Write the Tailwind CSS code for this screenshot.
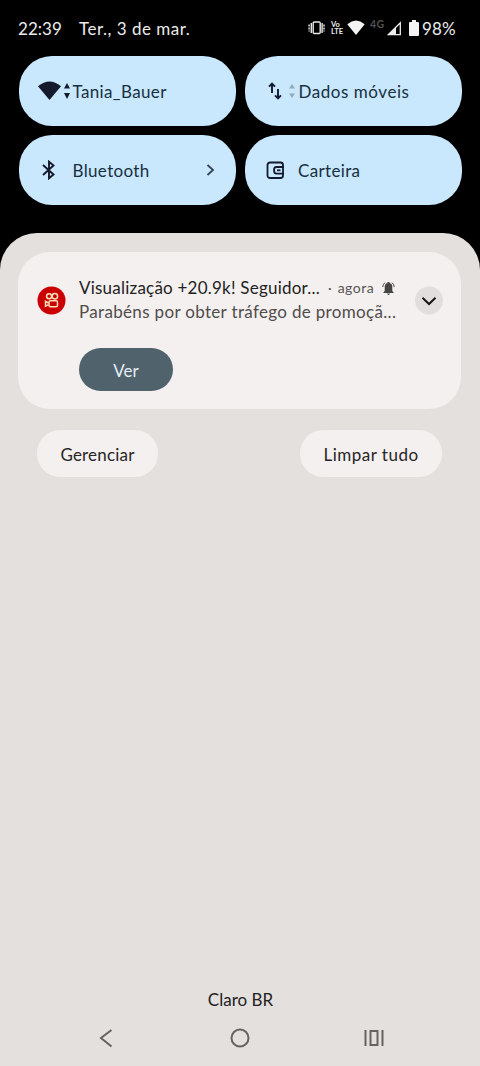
<!DOCTYPE html>
<html lang="pt-BR">
<head>
<meta charset="utf-8">
<title>Notificações</title>
<script src="https://cdn.jsdelivr.net/npm/@tailwindcss/browser@4"></script>
</head>
<body class="bg-black">
<div class="flex h-[1066px] w-[480px] flex-col overflow-hidden bg-black font-['Lato',sans-serif] text-[17px] leading-6 whitespace-nowrap">
  <header class="flex h-14 shrink-0 items-center pl-[18px] text-[#ececec]">
    <span class="w-[61px] pt-px tracking-[0.05px]">22:39</span>
    <span class="w-[229px] pt-px tracking-[0.5px]">Ter., 3 de mar.</span>
    <svg class="h-[18px] w-[17px]" viewBox="0 0 17 18" fill="none" stroke="#e8e8e8" stroke-width="1.4"><rect x="5.2" y="3" width="7" height="11.5" rx="1"/><path d="M3.3 4v10M14.1 4v10"/><path d="M1.1 5.5v7M16 5.5v7" stroke-dasharray="2 1"/></svg>
    <span class="ml-[6px] flex w-[14px] flex-col text-[7.5px] leading-[7px] font-bold"><span>Vo</span><span>LTE</span></span>
    <svg class="ml-[2px] h-[16px] w-[18px]" viewBox="0 0 18 16" fill="#f4f4f4"><path d="M.3 4.2Q9-3 17.7 4.2L9 15Z"/></svg>
    <span class="ml-[5px] w-[15px] -translate-y-[4px] text-[10.5px] leading-3 font-bold tracking-[0.3px] text-[#505050]">4G</span>
    <svg class="ml-[2px] h-[15px] w-[15px]" viewBox="0 0 15 15"><path d="M1.3 13.7H13.3V1.7Z" fill="none" stroke="#efefef" stroke-width="1.3"/><path d="M1 14H9V6Z" fill="#efefef"/></svg>
    <svg class="ml-[7px] h-[16px] w-[10px]" viewBox="0 0 10 16" fill="#f4f4f4"><path d="M3 0H7V2H9Q10 2 10 3V15Q10 16 9 16H1Q0 16 0 15V3Q0 2 1 2H3Z"/></svg>
    <span class="ml-[3px] pt-px tracking-[0.1px]">98%</span>
  </header>

  <section class="grid h-[177px] shrink-0 grid-cols-[217px_217px] grid-rows-[70px_70px] gap-x-[9px] gap-y-[9px] pl-[18.5px] text-[#17303f]">
    <div class="flex items-center rounded-[33px] bg-[#c9e7fd] pl-[19px]">
      <svg class="h-[20px] w-[23px]" viewBox="0 0 23 20" fill="#141a2c"><path d="M0 5.3Q11.500-4.200 23 5.300L11.500 19Z"/></svg>
      <svg class="ml-[3px] h-[16px] w-[6px]" viewBox="0 0 6 16" fill="#141a2c"><path d="M3 0L6 5.500H0ZM3 16L0 10H6Z"/></svg>
      <span class="ml-[3px] pt-[2px] tracking-[0.35px]">Tania_Bauer</span>
    </div>
    <div class="flex items-center rounded-[33px] bg-[#c9e7fd] pl-[23px]">
      <svg class="h-[18px] w-[15px]" viewBox="0 0 15 18" fill="none" stroke="#141a2c" stroke-width="1.900"><path d="M4 11V2M1 4.700L4 1.700L7 4.700M10 7V16M7 13.300L10 16.300L13 13.300"/></svg>
      <svg class="ml-[6px] h-[16px] w-[6px]" viewBox="0 0 6 16" fill="#91abbd"><path d="M3 1L6 5.500H0ZM3 15L0 10.500H6Z"/></svg>
      <span class="ml-[4px] pt-[2px] tracking-[0.55px]">Dados móveis</span>
    </div>
    <div class="flex items-center rounded-[33px] bg-[#c9e7fd] pl-[23px]">
      <svg class="h-[20px] w-[14px]" viewBox="0 0 14 20" fill="none" stroke="#141a2c" stroke-width="1.900"><path d="M1 5L11.500 14.500L7 18.300V1.700L11.500 5.500L1 15"/></svg>
      <span class="ml-[17px] pt-[2px] tracking-[0.35px]">Bluetooth</span>
      <svg class="mr-[21px] ml-auto h-[14px] w-[9px]" viewBox="0 0 9 14" fill="none" stroke="#37475a" stroke-width="1.900"><path d="M1.500 2L7 7L1.500 12"/></svg>
    </div>
    <div class="flex items-center rounded-[33px] bg-[#c9e7fd] pl-[21px]">
      <svg class="h-[19px] w-[19px]" viewBox="0 0 19 19" fill="none" stroke="#141a2c" stroke-width="1.800"><rect x="1.500" y="1.500" width="15.500" height="15.500" rx="2.500"/><path d="M18 6H10.500Q8 6 8 9.300Q8 12.600 10.500 12.600H18"/><path d="M11 9.300H14.500"/></svg>
      <span class="ml-[13.5px] pt-[2px] tracking-[0.35px]">Carteira</span>
    </div>
  </section>

  <main class="flex grow flex-col rounded-t-[37px] bg-[#e4e0dd] pr-[19px] pl-[18px] pt-[19px] text-[#222]">
    <article class="flex h-[157px] shrink-0 rounded-[32px] bg-[#f4f0ef] pl-[19px]">
      <svg class="mt-[34px] h-[29px] w-[29px] shrink-0" viewBox="0 0 29 29"><circle cx="14.500" cy="14.500" r="14" fill="#cb0005"/><g fill="none" stroke="#ffe0b5" stroke-width="1.500"><circle cx="12.100" cy="10.300" r="2.500"/><circle cx="17.900" cy="10.300" r="2.700"/><rect x="12" y="14.800" width="8.500" height="6" rx="1.500"/><path d="M11.500 17L8.500 15.300V20.200L11.500 18.700"/></g></svg>
      <div class="ml-[13px] w-[320px]">
        <div class="mt-[23px] flex h-[25px] items-center">
          <span class="w-[243px] tracking-[0.22px]">Visualização +20.9k! Seguidor...</span>
          <span class="ml-[6px] text-[14px] text-[#555]">·</span>
          <span class="ml-[6px] pt-px text-[14px] tracking-[0.500px] text-[#555]">agora</span>
          <svg class="ml-auto mr-[4px] h-[14px] w-[13px]" viewBox="0 0 13 14" fill="#444"><path d="M2.700 10V6Q2.700 2.600 5.500 2V1H7.500V2Q10.300 2.600 10.300 6V10L11.500 11.200V12H1.500V11.200ZM5 12.600H8Q7.500 14 6.500 14Q5.500 14 5 12.600Z"/><path d="M.8 6Q.8 3.300 3 1.600M12.200 6Q12.200 3.300 10 1.600" fill="none" stroke="#444"/></svg>
        </div>
        <p class="h-[25px] leading-[24px] tracking-[0.330px] text-[#504c4c]">Parabéns por obter tráfego de promoçã...</p>
        <button class="mt-[23px] flex h-[43px] w-[94px] items-center justify-center rounded-[22px] bg-[#50626c] pt-[2px] text-[#e3edf4]">Ver</button>
      </div>
      <svg class="mt-[34px] ml-[16px] h-[29px] w-[28px] shrink-0" viewBox="0 0 28 29"><circle cx="14" cy="14.500" r="14" fill="#e1dedd"/><path d="M7.500 11.800L14 18L20.500 11.800" fill="none" stroke="#171717" stroke-width="2"/></svg>
    </article>
    <div class="mt-[21px] flex shrink-0 justify-between px-[19px] text-[#272525]">
      <button class="h-[47px] w-[121px] rounded-[23px] bg-[#f4f0ef] pt-[2px] tracking-[0.200px]">Gerenciar</button>
      <button class="h-[47px] w-[142px] rounded-[23px] bg-[#f4f0ef] pt-[2px] tracking-[0.500px]">Limpar tudo</button>
    </div>
    <footer class="mt-auto flex h-[78px] shrink-0 flex-col">
      <p class="pl-[2px] text-center">Claro BR</p>
      <nav class="mt-[15px] flex h-[22px] items-center justify-between pr-[77px] pl-[81px]">
        <svg class="h-[20px] w-[14px]" viewBox="0 0 14 20" fill="none" stroke="#666260" stroke-width="2"><path d="M12.500 2L2 10L12.500 18.500"/></svg>
        <svg class="ml-[3px] h-[20px] w-[20px]" viewBox="0 0 20 20" fill="none" stroke="#666260" stroke-width="2"><circle cx="10" cy="10" r="8.500"/></svg>
        <svg class="h-[18px] w-[20px]" viewBox="0 0 20 18" fill="none" stroke="#666260" stroke-width="2"><path d="M1.500 1V17M18.500 1V17"/><rect x="6.500" y="2" width="7" height="14"/></svg>
      </nav>
    </footer>
  </main>
</div>
</body>
</html>
